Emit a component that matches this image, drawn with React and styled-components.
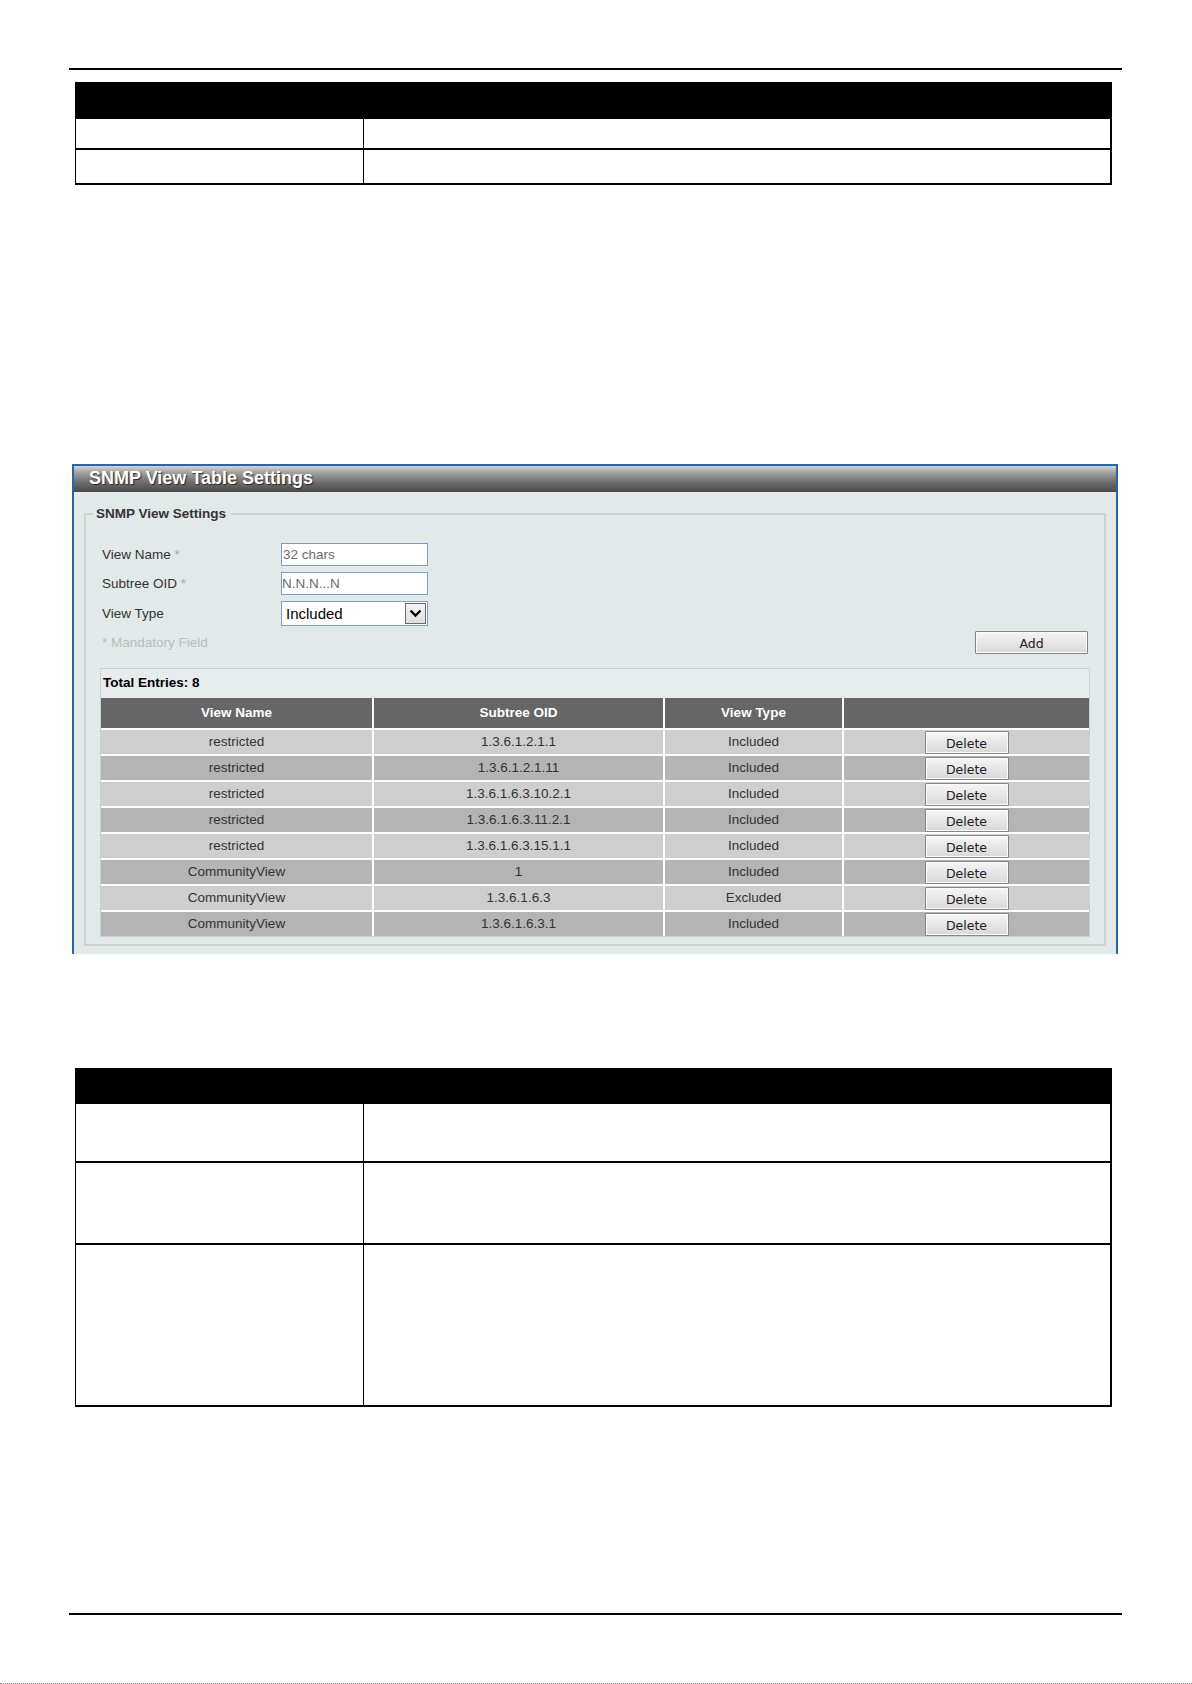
import React from 'react'
import styled, { createGlobalStyle } from 'styled-components'

const GlobalStyle = createGlobalStyle`
  html, body {
    margin: 0;
    padding: 0;
    background: #fff;
  }
  body {
    font-family: "Liberation Sans", Arial, sans-serif;
  }
`

const views = [
  { name: 'restricted', oid: '1.3.6.1.2.1.1', type: 'Included' },
  { name: 'restricted', oid: '1.3.6.1.2.1.11', type: 'Included' },
  { name: 'restricted', oid: '1.3.6.1.6.3.10.2.1', type: 'Included' },
  { name: 'restricted', oid: '1.3.6.1.6.3.11.2.1', type: 'Included' },
  { name: 'restricted', oid: '1.3.6.1.6.3.15.1.1', type: 'Included' },
  { name: 'CommunityView', oid: '1', type: 'Included' },
  { name: 'CommunityView', oid: '1.3.6.1.6.3', type: 'Excluded' },
  { name: 'CommunityView', oid: '1.3.6.1.6.3.1', type: 'Included' },
]

const App = () => {
  return (
    <Page>
      <GlobalStyle />
      <Rule />

      <DocTable $top={12}>
        <DocHead $h={37} />
        <DocRow $h={31}><DocCell /><DocCell /></DocRow>
        <DocRow $h={35}><DocCell /><DocCell /></DocRow>
      </DocTable>

      <Panel>
        <TitleBar>SNMP View Table Settings</TitleBar>
        <Fieldset>
          <Legend>SNMP View Settings</Legend>
          <Form>
            <FormRow>
              <Label>View Name <Star>*</Star></Label>
              <TextInput readOnly value="32 chars" />
            </FormRow>
            <FormRow>
              <Label>Subtree OID <Star>*</Star></Label>
              <TextInput readOnly value="N.N.N...N" $flush />
            </FormRow>
            <FormRow>
              <Label>View Type</Label>
              <Select>
                <span>Included</span>
                <SelectArrow>
                  <svg width="13" height="9" viewBox="0 0 13 9">
                    <polyline points="1.5,1.5 6.5,6.5 11.5,1.5" fill="none" stroke="#000" strokeWidth="2.4" />
                  </svg>
                </SelectArrow>
              </Select>
            </FormRow>
            <ActionRow>
              <Mandatory>* Mandatory Field</Mandatory>
              <Button $w={113}>Add</Button>
            </ActionRow>
          </Form>

          <EntriesBox>
            <Entries>Total Entries: 8</Entries>
            <ViewTable>
              <colgroup>
                <col style={{ width: 271 }} />
                <col style={{ width: 291 }} />
                <col style={{ width: 179 }} />
                <col />
              </colgroup>
              <thead>
                <tr>
                  <th>View Name</th>
                  <th>Subtree OID</th>
                  <th>View Type</th>
                  <th />
                </tr>
              </thead>
              <tbody>
                {views.map((v, i) => (
                  <BodyRow key={i} $dark={i % 2 === 1}>
                    <td>{v.name}</td>
                    <td>{v.oid}</td>
                    <td>{v.type}</td>
                    <td><Button $w={84}>Delete</Button></td>
                  </BodyRow>
                ))}
              </tbody>
            </ViewTable>
          </EntriesBox>
        </Fieldset>
      </Panel>

      <DocTable $top={114}>
        <DocHead $h={36} />
        <DocRow $h={59}><DocCell /><DocCell /></DocRow>
        <DocRow $h={82}><DocCell /><DocCell /></DocRow>
        <DocRow $h={162}><DocCell /><DocCell /></DocRow>
      </DocTable>

      <Rule $top={206} />
      <Footer />
    </Page>
  )
}

export default App

const Page = styled.div`
  width: 1192px;
  padding-top: 68px;
  display: flex;
  flex-direction: column;
`

const Rule = styled.div`
  margin: ${(p) => p.$top || 0}px 0 0 69px;
  width: 1053px;
  height: 2px;
  background: #000;
`

const Footer = styled.div`
  margin-top: 68px;
  height: 0;
  border-bottom: 1px dotted #8a8a8a;
`

const DocTable = styled.div`
  margin: ${(p) => p.$top}px 0 0 75px;
  width: 1037px;
  box-sizing: border-box;
  border-left: 1px solid #000;
  border-right: 2px solid #000;
`

const DocHead = styled.div`
  height: ${(p) => p.$h}px;
  background: #000;
`

const DocRow = styled.div`
  display: grid;
  grid-template-columns: 287px 1fr;
  height: ${(p) => p.$h}px;
  box-sizing: border-box;
  border-bottom: 2px solid #000;
`

const DocCell = styled.div`
  & + & {
    border-left: 1px solid #000;
  }
`

const Panel = styled.section`
  margin: 279px 0 0 72px;
  width: 1046px;
  box-sizing: border-box;
  border: 2px solid #2a66a3;
  border-bottom: none;
  background: #e1e9e9;
  padding-bottom: 8px;
`

const TitleBar = styled.h2`
  margin: 0;
  height: 26px;
  line-height: 24px;
  padding-left: 15px;
  background: linear-gradient(#d4d4d4 0%, #a2a2a2 25%, #6a6a6a 65%, #4a4a4a 100%);
  color: #fff;
  font-size: 18px;
  font-weight: bold;
  text-shadow: 1px 1px 1px #2a2a2a;
`

const Fieldset = styled.fieldset`
  margin: 15px 10px 0 10px;
  padding: 0 14px 7px 14px;
  border: 2px solid #cbd3d3;
  min-width: 0;
`

const Legend = styled.legend`
  margin-left: -7px;
  padding: 0 5px 0 3px;
  font-size: 13.5px;
  line-height: 14px;
  font-weight: bold;
  color: #333;
`

const Form = styled.div`
  padding-top: 22px;
  display: flex;
  flex-direction: column;
  gap: 6px;
`

const FormRow = styled.div`
  display: flex;
  align-items: center;
`

const Label = styled.label`
  width: 179px;
  padding-left: 2px;
  font-size: 13.5px;
  color: #333;
`

const Star = styled.span`
  color: #aaa;
`

const TextInput = styled.input`
  width: 147px;
  height: 23px;
  box-sizing: border-box;
  margin: 0;
  padding: 0 ${(p) => (p.$flush ? 0 : 1)}px;
  border: 1px solid #7a9fc9;
  background: #fff;
  font-family: "Liberation Sans", Arial, sans-serif;
  font-size: 13.5px;
  color: #6a6a6a;
  outline: none;
`

const Select = styled.div`
  width: 147px;
  height: 25px;
  box-sizing: border-box;
  border: 1px solid #7a9fc9;
  background: #fff;
  display: flex;
  align-items: center;
  justify-content: space-between;
  padding: 0 1px 0 4px;
  font-size: 15px;
  color: #000;
`

const SelectArrow = styled.span`
  width: 21px;
  height: 21px;
  box-sizing: border-box;
  border: 1px solid #6d6d6d;
  background: linear-gradient(#f4f4f4, #dedede);
  display: flex;
  align-items: center;
  justify-content: center;
`

const ActionRow = styled.div`
  margin-top: -1px;
  display: flex;
  align-items: center;
  justify-content: space-between;
  padding-right: 2px;
`

const Mandatory = styled.span`
  padding-left: 2px;
  font-size: 13.5px;
  color: #b9bebe;
`

const Button = styled.button`
  width: ${(p) => p.$w}px;
  height: 23px;
  margin: 0;
  padding: 1px 0 0;
  box-sizing: border-box;
  border: 1px solid #858585;
  border-radius: 1px;
  background: linear-gradient(#f7f7f7, #e6e6e6 50%, #d9d9d9);
  box-shadow: inset 0 0 0 1px #fbfbfb;
  font-family: "DejaVu Sans", Tahoma, sans-serif;
  font-size: 12.5px;
  color: #222;
  line-height: 21px;
`

const EntriesBox = styled.div`
  margin-top: 14px;
  border: 1px solid #c9d2d2;
  background: #e6ecec;
`

const Entries = styled.div`
  height: 29px;
  line-height: 27px;
  padding-left: 2px;
  font-size: 13.5px;
  font-weight: bold;
  color: #000;
`

const ViewTable = styled.table`
  width: 100%;
  table-layout: fixed;
  border-collapse: separate;
  border-spacing: 0;
  font-size: 13.5px;

  thead tr {
    height: 30px;
    background: #666;
  }
  th {
    padding: 0 0 2px;
    color: #fff;
    font-weight: bold;
    text-align: center;
  }
  th + th,
  td + td {
    border-left: 2px solid #fff;
  }
  td {
    padding: 0 0 2px;
    border-top: 2px solid #fff;
    text-align: center;
    vertical-align: middle;
    color: #333;
  }
  td:last-child {
    padding: 0;
  }
`

const BodyRow = styled.tr`
  height: 26px;
  background: ${(p) => (p.$dark ? '#b4b4b4' : '#cecece')};
`
